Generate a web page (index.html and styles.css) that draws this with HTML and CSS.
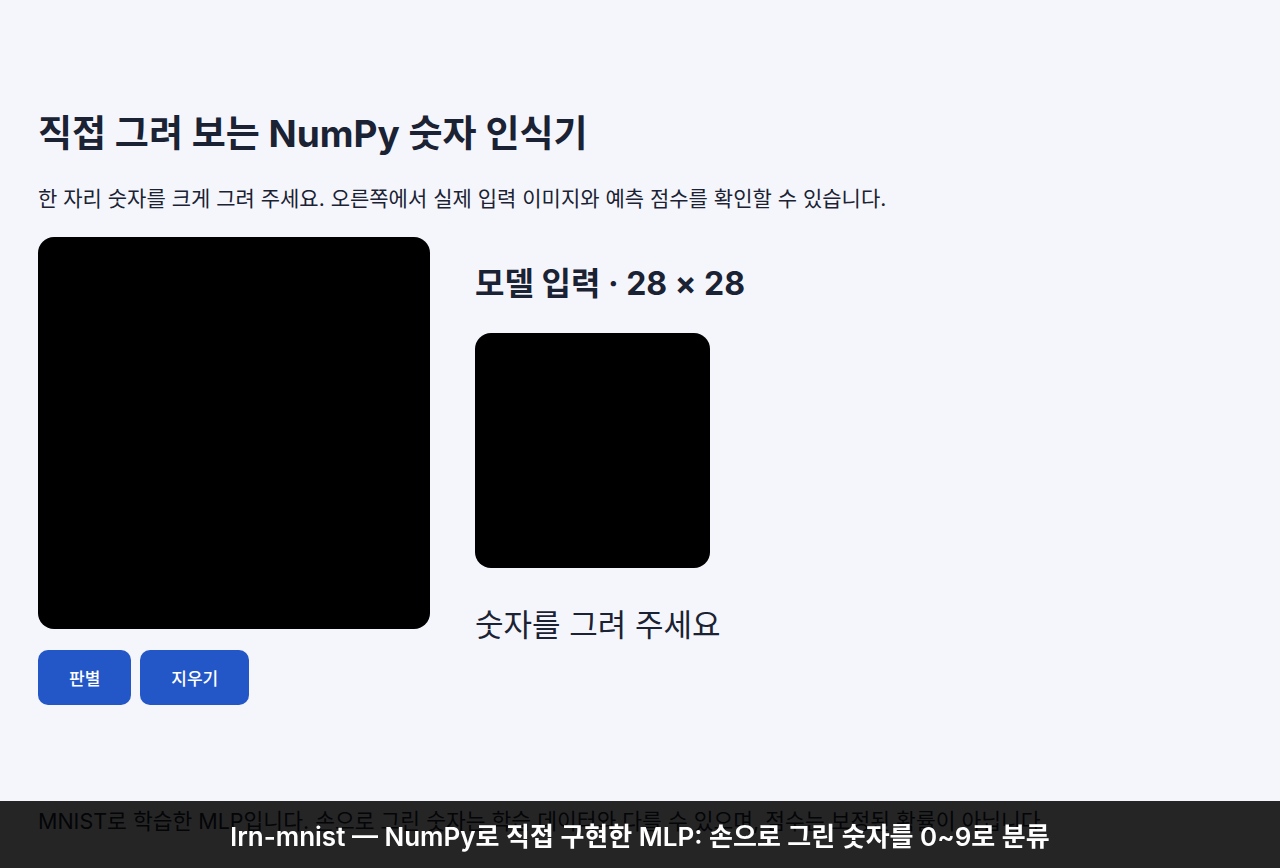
FILE: index.html
```html
<!DOCTYPE html>
<html lang="ko">
<head>
<meta charset="utf-8">
<title>lrn-mnist</title>
<link rel="stylesheet" href="styles.css">
</head>
<body>
<main class="page">
  <h1 class="title">직접 그려 보는 NumPy 숫자 인식기</h1>
  <p class="lead">한 자리 숫자를 크게 그려 주세요. 오른쪽에서 실제 입력 이미지와 예측 점수를 확인할 수 있습니다.</p>
  <section class="workspace">
    <div class="draw-col">
      <div class="pad"></div>
      <div class="actions">
        <button class="btn">판별</button>
        <button class="btn">지우기</button>
      </div>
    </div>
    <div class="result-col">
      <h2 class="subtitle">모델 입력 · 28 × 28</h2>
      <div class="preview"></div>
      <p class="prediction">숫자를 그려 주세요</p>
    </div>
  </section>
  <p class="note">MNIST로 학습한 MLP입니다. 손으로 그린 숫자는 학습 데이터와 다를 수 있으며, 점수는 보정된 확률이 아닙니다.</p>
</main>
<div class="caption">lrn-mnist — NumPy로 직접 구현한 MLP: 손으로 그린 숫자를 0~9로 분류</div>
</body>
</html>
```

FILE: styles.css
```css
html, body {
  margin: 0;
  padding: 0;
  background: #f5f6fb;
}
body {
  font-family: Inter, "Noto Sans CJK KR", sans-serif;
  color: #1a2233;
}
.page {
  padding: 107px 38px 40px;
}
.title {
  margin: 0;
  font-size: 37px;
  font-weight: 700;
  line-height: 54px;
}
.lead {
  margin: 23px 0 0;
  font-size: 21px;
  line-height: 30px;
}
.workspace {
  display: flex;
  gap: 45px;
  margin-top: 23px;
  align-items: flex-start;
}
.draw-col {
  display: flex;
  flex-direction: column;
  gap: 21px;
}
.pad {
  width: 392px;
  height: 392px;
  background: #000;
  border-radius: 16px;
}
.actions {
  display: flex;
  gap: 9px;
}
.btn {
  font-family: inherit;
  font-size: 17px;
  font-weight: 500;
  color: #fff;
  background: #2356c6;
  border: none;
  border-radius: 10px;
  height: 55px;
  padding: 0 31px;
}
.result-col {
  display: flex;
  flex-direction: column;
}
.subtitle {
  margin: 24px 0 26px;
  font-size: 32px;
  line-height: 46px;
  font-weight: 700;
}
.preview {
  width: 235px;
  height: 235px;
  background: #000;
  border-radius: 16px;
}
.prediction {
  margin: 34px 0 0;
  font-size: 31px;
  line-height: 46px;
}
.note {
  margin: 101px 0 0;
  font-size: 21.5px;
  line-height: 30px;
}
.caption {
  position: fixed;
  left: 0;
  right: 0;
  bottom: 0;
  height: 67px;
  display: flex;
  align-items: center;
  justify-content: center;
  background: rgba(0, 0, 0, 0.85);
  color: #fff;
  font-size: 26px;
  font-weight: 600;
}
```
